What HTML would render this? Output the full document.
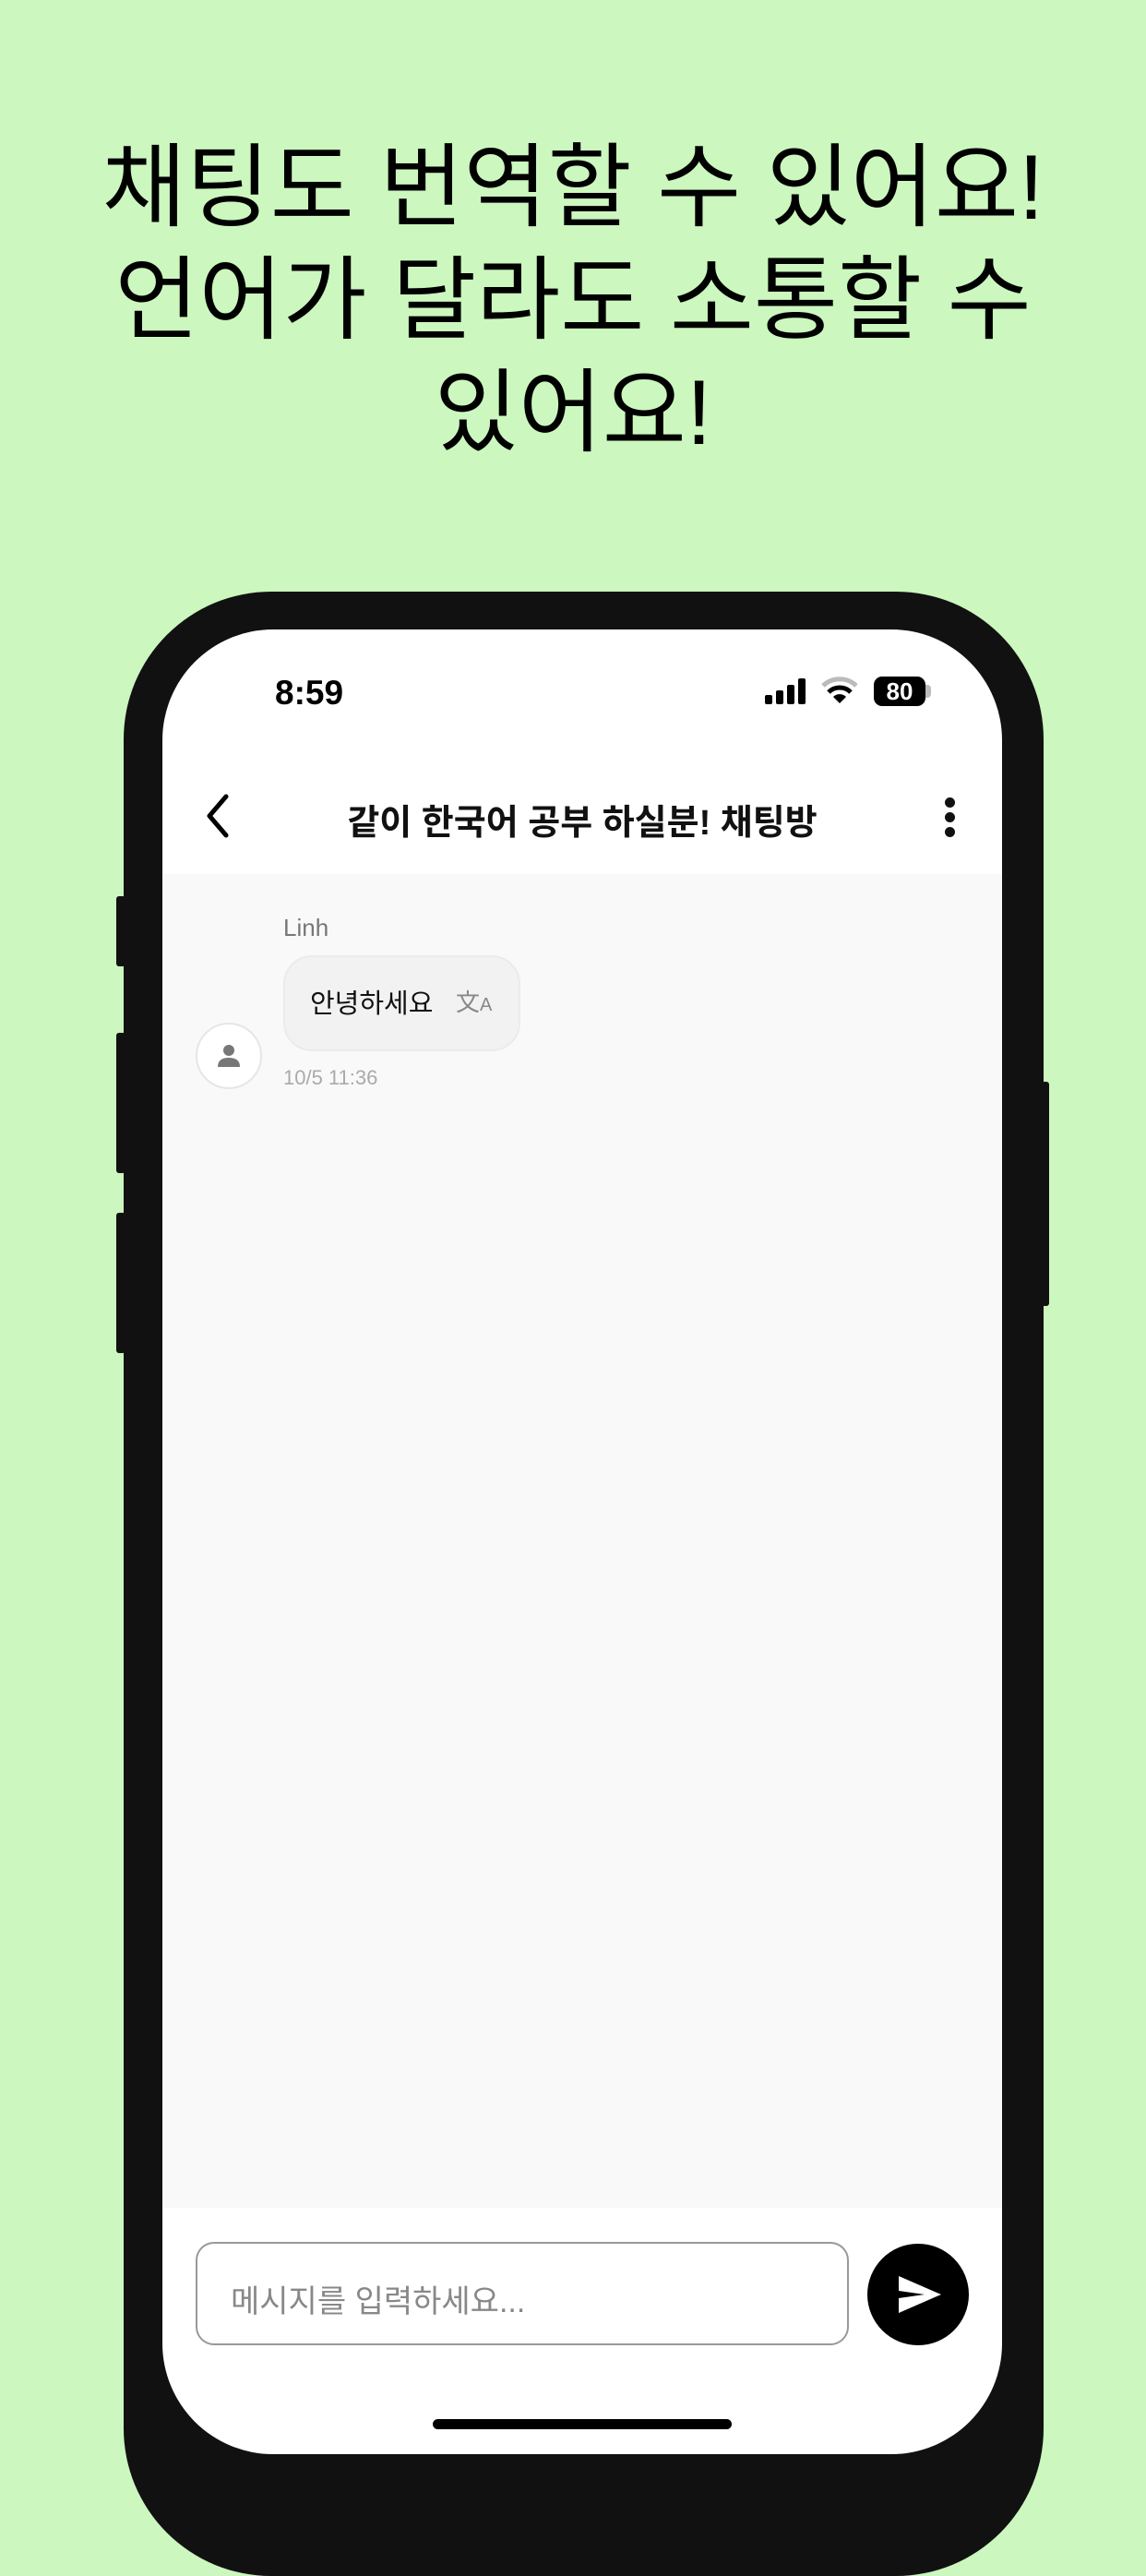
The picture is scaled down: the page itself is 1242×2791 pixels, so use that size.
<!DOCTYPE html>
<html><head><meta charset="utf-8"><style>
*{margin:0;padding:0;box-sizing:border-box}
body{width:1242px;height:2688px;background:#ccf7bf;position:relative;overflow:hidden;font-family:"Liberation Sans","Noto Sans CJK KR",sans-serif}
.h{position:absolute;left:0;width:1242px;top:142px;text-align:center;font-size:99px;line-height:122px;color:#000;font-family:"Liberation Sans","Noto Sans CJK KR",sans-serif}
.frame{position:absolute;left:134px;top:641px;width:997px;height:2150px;background:#111;border-radius:160px}
.btn{position:absolute;background:#111;border-radius:3px}
.screen{position:absolute;left:176px;top:682px;width:910px;height:1977px;background:#fff;border-radius:120px;overflow:hidden}
.abs{position:absolute}
</style></head><body>
<div class="h">채팅도 번역할 수 있어요!<br>언어가 달라도 소통할 수<br>있어요!</div>
<div class="btn" style="left:126px;top:971px;width:10px;height:76px"></div>
<div class="btn" style="left:126px;top:1119px;width:10px;height:152px"></div>
<div class="btn" style="left:126px;top:1314px;width:10px;height:152px"></div>
<div class="btn" style="left:1129px;top:1172px;width:8px;height:243px"></div>
<div class="frame"></div>
<div class="screen">
  <div class="abs" style="left:122px;top:48px;font-size:37px;font-weight:bold;color:#000">8:59</div>
  <svg class="abs" style="left:653px;top:53px" width="46" height="28"><rect x="0" y="18" width="8" height="10" rx="2"/><rect x="12" y="13" width="8" height="15" rx="2"/><rect x="24" y="7" width="8" height="21" rx="2"/><rect x="36" y="0" width="8" height="28" rx="2"/></svg>
  <svg class="abs" style="left:714px;top:51px" width="40" height="30" viewBox="0 0 40 30"><path d="M2 10 A26 26 0 0 1 38 10" stroke="#bbb" stroke-width="5" fill="none"/><path d="M8 17 A17 17 0 0 1 32 17" stroke="#000" stroke-width="5" fill="none"/><path d="M20 29 L13 22 A10 10 0 0 1 27 22 Z"/></svg>
  <div class="abs" style="left:771px;top:51px;width:56px;height:32px;background:#000;border-radius:9px;color:#fff;font-size:26px;font-weight:bold;text-align:center;line-height:32px">80</div>
  <div class="abs" style="left:827px;top:60px;width:6px;height:14px;background:#bbb;border-radius:0 4px 4px 0"></div>
  <svg class="abs" style="left:45px;top:178px" width="30" height="48"><path d="M24 3 L6 24 L24 45" stroke="#000" stroke-width="5" fill="none" stroke-linecap="round" stroke-linejoin="round"/></svg>
  <div class="abs" style="left:0;width:910px;top:178px;text-align:center;font-size:38px;font-weight:bold;color:#111">같이 한국어 공부 하실분! 채팅방</div>
  <div class="abs" style="left:848px;top:182px;width:11px;height:11px;border-radius:50%;background:#111"></div>
  <div class="abs" style="left:848px;top:198px;width:11px;height:11px;border-radius:50%;background:#111"></div>
  <div class="abs" style="left:848px;top:214px;width:11px;height:11px;border-radius:50%;background:#111"></div>
  <div class="abs" style="left:0;top:265px;width:910px;height:1445px;background:#f9f9f9"></div>
  <div class="abs" style="left:131px;top:308px;font-size:26px;color:#777">Linh</div>
  <div class="abs" style="left:131px;top:353px;width:257px;height:104px;background:#f2f2f2;border:2px solid #ebebeb;border-radius:31px"></div>
  <div class="abs" style="left:160px;top:382px;font-size:29px;color:#111">안녕하세요</div>
  <div class="abs" style="left:318px;top:384px;font-size:26px;color:#888">文<span style="font-size:20px">A</span></div>
  <div class="abs" style="left:36px;top:426px;width:72px;height:72px;border-radius:50%;background:#fff;border:2px solid #e6e6e6"></div>
  <svg class="abs" style="left:56px;top:446px" width="32" height="32"><circle cx="16" cy="10" r="6" fill="#777"/><path d="M4 28 Q4 18 16 18 Q28 18 28 28 Z" fill="#777"/></svg>
  <div class="abs" style="left:131px;top:473px;font-size:22px;color:#aaa">10/5 11:36</div>
  <div class="abs" style="left:36px;top:1747px;width:708px;height:112px;border:2px solid #999;border-radius:20px"></div>
  <div class="abs" style="left:74px;top:1784px;font-size:34px;color:#888">메시지를 입력하세요...</div>
  <div class="abs" style="left:764px;top:1749px;width:110px;height:110px;border-radius:50%;background:#000"></div>
  <svg class="abs" style="left:796px;top:1782px" width="50" height="44"><path d="M2 2 L48 22 L2 42 L2 26 L30 22 L2 18 Z" fill="#fff"/></svg>
  <div class="abs" style="left:293px;top:1939px;width:324px;height:11px;background:#000;border-radius:6px"></div>
</div>
</body></html>
